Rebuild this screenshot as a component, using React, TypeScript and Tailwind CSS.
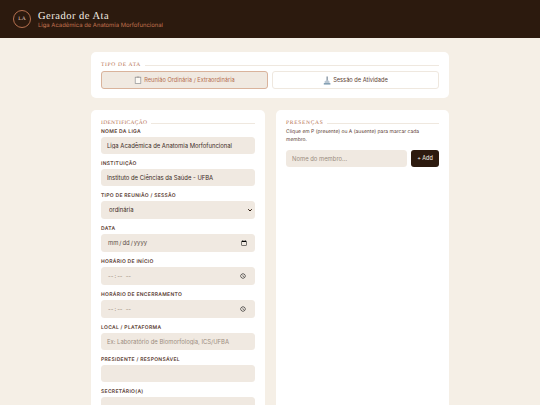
const serif = "font-['Liberation_Serif',serif]";

function SectionTitle({ children, tracking = "tracking-[0.7px]" }: { children: string; tracking?: string }) {
  return (
    <div className="flex items-center gap-[4px]">
      <span className={`${serif} ${tracking} text-[5.5px] leading-[8px] uppercase text-[#b5704f] whitespace-nowrap`}>
        {children}
      </span>
      <div className="h-px flex-1 bg-[#efe8df]" />
    </div>
  );
}

function Field({ label, children }: { label: string; children: React.ReactNode }) {
  return (
    <div className="flex flex-col">
      <label className="pt-[1px] text-[5px] leading-[8px] mb-[1px] font-semibold tracking-[0.3px] uppercase text-[#5c4033]">{label}</label>
      {children}
    </div>
  );
}

const inputCls =
  "block w-full rounded-[3.5px] bg-[#f0e9e1] px-[6px] text-[5.9px] text-[#3d2b1f] placeholder:text-[#9b8c80] outline-none";

function ClipboardIcon() {
  return (
    <svg width="8" height="8" viewBox="0 0 8 8" className="shrink-0">
      <rect x="1.2" y="1.2" width="5.6" height="6.4" fill="#fdfaf5" stroke="#8d8f90" strokeWidth="0.7" />
      <rect x="2.7" y="0.5" width="2.6" height="1.3" fill="#a8a4a0" />
    </svg>
  );
}

function MicroscopeIcon() {
  return (
    <svg width="8" height="9" viewBox="0 0 8 9" className="shrink-0">
      <rect x="3.4" y="0.5" width="1.6" height="4.5" fill="#9aa6b2" />
      <path d="M2 5.2 C3 4 5.6 4 6.4 5.6 L6.6 7.4 L1.4 7.4 Z" fill="#b9c6d2" />
      <rect x="0.8" y="7.2" width="6.6" height="1.3" fill="#6f8fa6" />
    </svg>
  );
}

export default function App() {
  return (
    <div className="h-[405px] overflow-hidden bg-[#f5efe6] font-['Inter',sans-serif] [text-rendering:geometricPrecision]">
      <header className="flex h-[38px] items-center gap-[7px] bg-[#2c1a0e] pl-[13px]">
        <div className={`${serif} flex h-[18px] w-[18px] items-center justify-center rounded-full border border-[#b5704f] text-[5.5px] text-[#e8d5c4]`}>
          LA
        </div>
        <div className="mt-[1px] flex flex-col">
          <span className={`${serif} text-[10.5px] leading-[11px] tracking-[0.5px] text-[#f5efe6]`}>Gerador de Ata</span>
          <span className="text-[5.9px] leading-[7px] text-[#c0714f]">Liga Acadêmica de Anatomia Morfofuncional</span>
        </div>
      </header>

      <main className="mx-auto flex w-[358px] flex-col gap-[12px] pt-[14px]">
        <section className="flex flex-col gap-[2px] rounded-[5px] bg-white px-[10px] pt-[9px] pb-[9px]">
          <SectionTitle>Tipo de Ata</SectionTitle>
          <div className="grid grid-cols-2 gap-[4px]">
            <button className="flex h-[18px] items-center justify-center gap-[2px] rounded-[3px] border border-[#d9b39c] bg-[#f0e9e1] text-[5.7px] text-[#b5704f]">
              <ClipboardIcon />
              Reunião Ordinária / Extraordinária
            </button>
            <button className="flex h-[18px] items-center justify-center gap-[2px] rounded-[3px] border border-[#efe8df] bg-white text-[5.7px] text-[#5c4033]">
              <MicroscopeIcon />
              Sessão de Atividade
            </button>
          </div>
        </section>

        <div className="grid grid-cols-[174px_173px] gap-[11px]">
          <section className="flex flex-col rounded-[5px] bg-white px-[10px] pt-[9px] pb-[10px]">
            <SectionTitle tracking="tracking-[0.3px]">Identificação</SectionTitle>
            <div className="flex flex-col gap-[5px]">
              <Field label="Nome da Liga">
                <input className={`${inputCls} h-[17px]`} defaultValue="Liga Acadêmica de Anatomia Morfofuncional" />
              </Field>
              <Field label="Instituição">
                <input className={`${inputCls} h-[17px]`} defaultValue="Instituto de Ciências da Saúde - UFBA" />
              </Field>
              <Field label="Tipo de Reunião / Sessão">
                <div className="relative">
                  <select className={`${inputCls} h-[18px] appearance-none pl-[8px]`} defaultValue="ordinaria">
                    <option value="ordinaria">ordinária</option>
                  </select>
                  <svg width="6" height="6" viewBox="0 0 6 6" className="absolute right-[2px] top-[6px]">
                    <path d="M1.2 2.2 L3 4 L4.8 2.2" fill="none" stroke="#2c1a0e" strokeWidth="1" />
                  </svg>
                </div>
              </Field>
              <Field label="Data">
                <input type="date" className={`${inputCls} h-[18px] text-[#5c4f46]`} />
              </Field>
              <Field label="Horário de Início">
                <input type="time" className={`${inputCls} h-[18px] text-[#9b8c80]`} />
              </Field>
              <Field label="Horário de Encerramento">
                <input type="time" className={`${inputCls} h-[18px] text-[#9b8c80]`} />
              </Field>
              <Field label="Local / Plataforma">
                <input className={`${inputCls} h-[17px]`} placeholder="Ex: Laboratório de Biomorfologia, ICS/UFBA" />
              </Field>
              <Field label="Presidente / Responsável">
                <input className={`${inputCls} h-[17px]`} />
              </Field>
              <Field label="Secretário(a)">
                <input className={`${inputCls} h-[17px]`} />
              </Field>
            </div>
          </section>

          <section className="flex flex-col rounded-[5px] bg-white px-[10px] pt-[9px] pb-[10px]">
            <SectionTitle>Presenças</SectionTitle>
            <p className="mt-[1px] text-[5px] leading-[8px] text-[#5c4033]">
              Clique em P (presente) ou A (ausente) para marcar cada membro.
            </p>
            <div className="mt-[6px] flex gap-[4px]">
              <input className={`${inputCls} h-[17px] flex-1`} placeholder="Nome do membro..." />
              <button className="h-[17px] w-[28px] rounded-[3px] bg-[#2c1a0e] text-[5.5px] text-[#f5efe6]">+ Add</button>
            </div>
          </section>
        </div>
      </main>
    </div>
  );
}
